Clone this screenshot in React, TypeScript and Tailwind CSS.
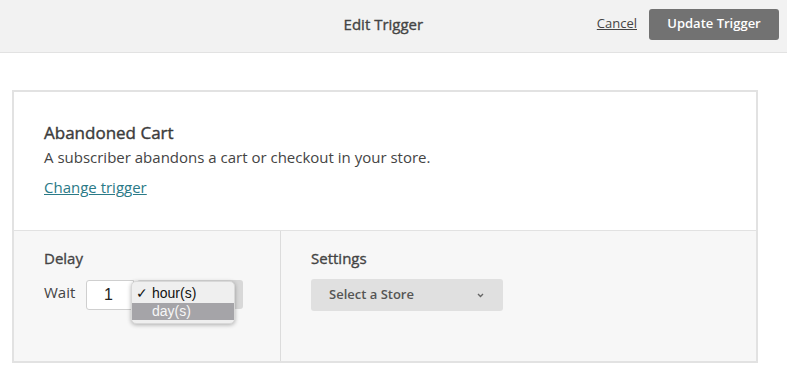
import React from "react";

const App = () => {
  return (
    <div className="w-[787px] h-[377px] bg-white font-['Open_Sans',sans-serif] text-[#3d3d3d] overflow-hidden">
      <div className="h-[53px] bg-[#f2f2f2] border-b border-[#e2e2e2] flex items-center pb-[4px]">
        <div className="flex-1 flex justify-center pl-[170px]">
          <h1 className="text-[15px] text-[#444] [-webkit-text-stroke:0.35px_#444]">Edit Trigger</h1>
        </div>
        <div className="flex items-center justify-end pr-[8px]">
          <a href="#" className="text-[13px] text-[#444] underline mr-[12px]">
            Cancel
          </a>
          <button className="h-[31px] w-[130px] rounded-[3px] bg-[#727272] text-white text-[13px] font-semibold">
            Update Trigger
          </button>
        </div>
      </div>

      <div className="pt-[37px] pl-[12px]">
        <div className="w-[746px] border-2 border-[#e2e2e2]">
          <div className="h-[138px] bg-white pl-[30px] pt-[30px]">
            <h2 className="text-[17px] leading-[22px] text-[#3c3c3c] [-webkit-text-stroke:0.4px_#3c3c3c]">
              Abandoned Cart
            </h2>
            <p className="text-[15px] leading-[20px] mt-[3px] text-[#444]">
              A subscriber abandons a cart or checkout in your store.
            </p>
            <a href="#" className="inline-block mt-[10px] text-[15px] leading-[20px] text-[#2b7a87] underline">
              Change trigger
            </a>
          </div>
          <div className="flex h-[131px] bg-[#f7f7f7] border-t border-[#e2e2e2]">
            <div className="w-[267px] border-r border-[#dcdcdc] pl-[30px] pt-[17px]">
              <h3 className="text-[15px] leading-[20px] text-[#444] [-webkit-text-stroke:0.35px_#444]">Delay</h3>
              <div className="relative flex items-start mt-[12px]">
                <span className="text-[15px] leading-[20px] mt-[2px] text-[#444]">Wait</span>
                <div className="ml-[11px] w-[48px] h-[30px] bg-white border border-[#cfcfcf] rounded-l-[3px] flex items-center justify-center pr-[4px] text-[16px] font-['Liberation_Sans',sans-serif] text-[#222]">
                  1
                </div>
                <div className="ml-[3px] w-[106px] h-[29px] bg-[#d8d8d8] rounded-[3px]"></div>
                <div className="absolute left-[87px] top-[1px] w-[104px] h-[43px] rounded-[5px] bg-[#efefef] shadow-[0_1px_4px_rgba(0,0,0,0.3)] border border-[#d8d8d8] font-['Liberation_Sans',sans-serif] text-[14px]">
                  <div className="h-[21px] flex items-center pl-[4px] pt-[2px] text-[#111]">
                    <span className="w-[16px] text-[14px]">✓</span>
                    <span>hour(s)</span>
                  </div>
                  <div className="h-[17px] flex items-center pl-[20px] bg-[#a5a4a8] text-[#f7f7f7]">day(s)</div>
                </div>
              </div>
            </div>
            <div className="flex-1 pl-[30px] pt-[17px]">
              <h3 className="text-[15px] leading-[20px] text-[#444] [-webkit-text-stroke:0.35px_#444]">Settings</h3>
              <button className="mt-[11px] w-[192px] h-[32px] bg-[#e0e0e0] rounded-[3px] flex items-center justify-between pl-[18px] pr-[19px] text-[13px] font-semibold text-[#555]">
                <span>Select a Store</span>
                <svg width="7" height="5" viewBox="0 0 7 5" fill="none">
                  <path d="M1 1 L3.5 3.5 L6 1" stroke="#666" strokeWidth="1.4" />
                </svg>
              </button>
            </div>
          </div>
        </div>
      </div>
    </div>
  );
};

export default App;
